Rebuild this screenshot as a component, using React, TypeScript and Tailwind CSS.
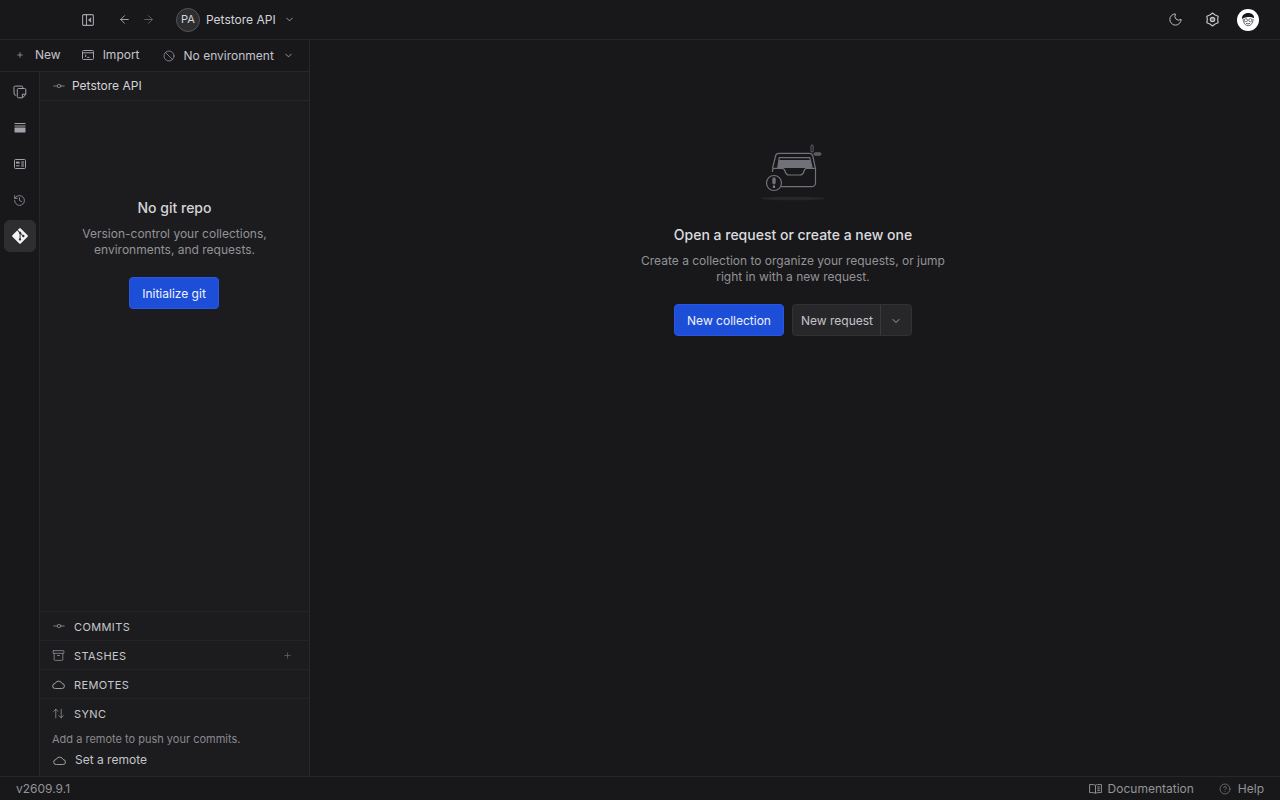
import {
  Archive,
  ArrowLeft,
  ArrowRight,
  ArrowUpDown,
  Ban,
  ChevronDown,
  CircleHelp,
  GitCommitHorizontal,
  History,
  Moon,
  Plus,
} from 'lucide-react'
import { FaGitAlt } from 'react-icons/fa'

function PanelIcon() {
  return (
    <svg width="12" height="12" viewBox="0 0 12 12" fill="none" stroke="#a1a1aa" strokeWidth="1.1">
      <rect x="0.6" y="0.6" width="10.8" height="10.8" rx="1.2" />
      <path d="M4.5 0.6V11.4" />
      <path d="M8.6 4.4L6.8 6l1.8 1.6z" fill="#a1a1aa" />
    </svg>
  )
}

function TerminalIcon() {
  return (
    <svg width="12" height="10" viewBox="0 0 12 10" fill="none" stroke="#a1a1aa" strokeWidth="1">
      <rect x="0.5" y="0.5" width="11" height="9" rx="1" />
      <path d="M0.5 2.8H11.5" />
      <path d="M2.8 4.6L4.2 5.8 2.8 7M5.2 7.4H7.4" />
    </svg>
  )
}

function CollectionsIcon() {
  return (
    <svg width="14" height="14" viewBox="0 0 14 14" fill="none" stroke="#a1a1aa" strokeWidth="1">
      <path d="M3.2 10.2H2.4A1.2 1.2 0 0 1 1.2 9L0.9 2.4A1.3 1.3 0 0 1 2.2 1.1H8.6A1.2 1.2 0 0 1 9.8 2.2V3" />
      <path d="M4.3 4.7A1.2 1.2 0 0 1 5.5 3.5H11.6A1.2 1.2 0 0 1 12.8 4.7V9.4L9.6 12.8H5.5A1.2 1.2 0 0 1 4.3 11.6Z" />
      <path d="M9.4 12.6V9.2H12.8" />
    </svg>
  )
}

function StackIcon() {
  return (
    <svg width="12" height="10" viewBox="0 0 12 10" fill="#a1a1aa">
      <rect x="0.5" y="0" width="11" height="1" />
      <rect x="0.5" y="2.5" width="11" height="1" />
      <rect x="0.5" y="4.5" width="11" height="5" rx="0.4" />
    </svg>
  )
}

function EnvIcon() {
  return (
    <svg width="12" height="10" viewBox="0 0 12 10" fill="none" stroke="#a1a1aa" strokeWidth="1">
      <rect x="0.5" y="0.5" width="11" height="9" rx="1" />
      <rect x="2" y="2.6" width="3.6" height="2" fill="#a1a1aa" stroke="none" />
      <path d="M2 6.8H5.6M7.2 3H10M7.2 5H10M7.2 7H10" />
    </svg>
  )
}

function CloudIcon() {
  return (
    <svg width="13" height="9" viewBox="0 0 14 10" fill="none" stroke="#a1a1aa" strokeWidth="1.1">
      <path d="M3.5 9.5H10.5A2.8 2.8 0 0 0 11 3.9A4.2 4.2 0 0 0 3.2 3.9A2.8 2.8 0 0 0 3.5 9.5Z" />
    </svg>
  )
}

function BookIcon() {
  return (
    <svg width="13" height="10" viewBox="0 0 13 10" fill="none" stroke="#8f8f8f" strokeWidth="1">
      <path d="M6.5 1.2C5.5 0.7 4 0.5 0.6 0.5V8.5C4 8.5 5.5 8.7 6.5 9.3C7.5 8.7 9 8.5 12.4 8.5V0.5C9 0.5 7.5 0.7 6.5 1.2Z" />
      <path d="M6.5 1.2V9.3M8.3 3H10.8M8.3 4.8H10.8M8.3 6.6H10.8" />
    </svg>
  )
}

function CogIcon() {
  return (
    <svg width="15" height="15" viewBox="0 0 15 15" fill="none" stroke="#c4c4c9" strokeWidth="1.2">
      <path
        d="M7.5 1 10.1 3 13.13 4.25 12.7 7.5 13.13 10.75 10.1 12 7.5 14 4.9 12 1.87 10.75 2.3 7.5 1.87 4.25 4.9 3Z"
        strokeLinejoin="round"
      />
      <circle cx="7.5" cy="7.5" r="2.2" fill="#c4c4c9" fillOpacity="0.5" />
    </svg>
  )
}

function Avatar() {
  return (
    <svg width="22" height="22" viewBox="0 0 22 22">
      <circle cx="11" cy="11" r="11" fill="#fff" />
      <path d="M5 10C4.6 6.2 7.6 3.8 11.4 3.9c3.4.1 6 2 5.6 5.2-1.8-1-3.7-1.3-5.8-1.2-2.2.1-4.3.7-6.2 2.1z" fill="#18181b" />
      <path d="M6.2 10.2c.2 3.8 2.1 6.5 4.9 6.5s4.8-2.7 5-6.7" fill="none" stroke="#3f3f46" strokeWidth="0.8" />
      <circle cx="8.9" cy="11.2" r="1.6" fill="none" stroke="#3f3f46" strokeWidth="0.7" />
      <circle cx="13.3" cy="11.2" r="1.6" fill="none" stroke="#3f3f46" strokeWidth="0.7" />
      <path d="M9 14.3c1.3.7 2.7.7 4 0" fill="none" stroke="#3f3f46" strokeWidth="0.8" />
    </svg>
  )
}

function InboxIllustration() {
  return (
    <svg width="66" height="58" viewBox="0 0 66 58" fill="none" stroke="#71717a" strokeWidth="1.2">
      <path d="M12.5 24.5 15.5 12A3.5 3.5 0 0 1 19 9.3H49.5A3.5 3.5 0 0 1 52.8 12L55.5 24.5V39A3.7 3.7 0 0 1 51.8 42.7H21" />
      <path d="M17.7 24 19.3 13.7H49.8L52.2 24" />
      <path d="M19 16H50.2L51.7 24H17.9Z" fill="#71717a" stroke="none" />
      <path d="M12.5 28V26.3A2 2 0 0 1 14.5 24.3H22C24 24.3 24.5 25.5 25 27C25.8 30 27 31 29 31H40C42 31 43.3 30 44 27C44.5 25.3 45.2 24.3 47 24.3H55.5" />
      <circle cx="14" cy="39" r="7.5" fill="#18181b" />
      <rect x="12.8" y="33.800" width="2.4" height="6.200" rx="1" strokeWidth="0.9" fill="#71717a" />
      <circle cx="14" cy="42.7" r="1.2" fill="#8a8a92" stroke="none" />
      <rect x="51" y="1" width="2.2" height="7" rx="1.1" strokeWidth="0.8" />
      <rect x="54" y="8.8" width="7" height="2.4" rx="1.2" strokeWidth="0.8" fill="#52525b" />
      <ellipse cx="33" cy="54.5" rx="32" ry="1.8" fill="#27272a" stroke="none" />
    </svg>
  )
}

function SectionRow({ label, icon, plus }: { label: string; icon: React.ReactNode; plus?: boolean }) {
  return (
    <div className="flex h-[29px] shrink-0 items-center border-t border-[#232326] pl-[12px] pr-[17px]">
      <span className="flex w-[22px] shrink-0 items-center">{icon}</span>
      <span className="pt-[3px] text-[11px] tracking-[0.035em] text-[#c8c8cc]">{label}</span>
      {plus && <Plus size={9} className="ml-auto text-[#63636b]" />}
    </div>
  )
}

function RailButton({ children, active }: { children: React.ReactNode; active?: boolean }) {
  return (
    <div className={`flex h-8 w-8 items-center justify-center rounded-md ${active ? 'bg-[#2e2e31]' : ''}`}>
      {children}
    </div>
  )
}

export default function App() {
  return (
    <div className="flex h-screen w-[1280px] flex-col overflow-hidden bg-[#18181b] font-['Inter',sans-serif] text-[12px] text-[#e4e4e7]">
      {/* title bar */}
      <div className="flex h-10 shrink-0 items-center border-b border-[#27272a] pl-[82px] pr-[21px]">
        <PanelIcon />
        <ArrowLeft size={13} strokeWidth={1.6} className="ml-[24px] text-[#b4b4bb]" />
        <ArrowRight size={13} strokeWidth={1.6} className="ml-[11px] text-[#6b6b73]" />
        <div className="ml-[21px] flex h-6 w-6 items-center justify-center rounded-full border border-[#52525b] bg-[#2e2e31] text-[11px] text-[#d4d4d8]">
          PA
        </div>
        <span className="ml-[6px] text-[#d4d4d8]">Petstore API</span>
        <ChevronDown size={11} className="ml-[8px] text-[#a1a1aa]" />
        <div className="ml-auto flex items-center">
          <Moon size={15} strokeWidth={1.5} className="text-[#c4c4c9]" />
          <div className="ml-[22px]">
            <CogIcon />
          </div>
          <div className="ml-[17px]">
            <Avatar />
          </div>
        </div>
      </div>

      <div className="flex min-h-0 flex-1">
        {/* left column */}
        <div className="flex w-[310px] shrink-0 flex-col border-r border-[#27272a] bg-[#1c1c1f]">
          <div className="flex h-8 shrink-0 items-center whitespace-nowrap border-b border-[#27272a] bg-[#18181b] pb-px pl-[16px] text-[#c4c4c9]">
            <Plus size={8} strokeWidth={2} className="text-[#b4b4bb]" />
            <span className="ml-[11px]">New</span>
            <span className="ml-[21px]">
              <TerminalIcon />
            </span>
            <span className="ml-[9px]">Import</span>
            <Ban size={12} strokeWidth={1.4} className="ml-[23px] mt-px text-[#a1a1aa]" />
            <span className="ml-[9px] pt-[2px]">No environment</span>
            <ChevronDown size={11} className="ml-[9px] mt-px text-[#a1a1aa]" />
          </div>

          <div className="flex min-h-0 flex-1">
            <div className="flex w-10 shrink-0 flex-col items-center gap-1 border-r border-[#27272a] bg-[#18181b] pt-1">
              <RailButton>
                <CollectionsIcon />
              </RailButton>
              <RailButton>
                <StackIcon />
              </RailButton>
              <RailButton>
                <EnvIcon />
              </RailButton>
              <RailButton>
                <History size={13} strokeWidth={1.4} className="text-[#a1a1aa]" />
              </RailButton>
              <RailButton active>
                <FaGitAlt size={18} className="text-[#f4f4f5]" />
              </RailButton>
            </div>

            <div className="flex min-w-0 flex-1 flex-col">
              <div className="flex h-[29px] shrink-0 items-center border-b border-[#27272a] pl-[12px] text-[#d4d4d8]">
                <GitCommitHorizontal size={14} strokeWidth={1.2} className="text-[#a1a1aa]" />
                <span className="ml-[6px]">Petstore API</span>
              </div>

              <div className="flex flex-1 flex-col items-center pt-[98px]">
                <h3 className="text-[14px] font-medium leading-[18px] text-[#d4d4d8]">No git repo</h3>
                <p className="mt-[9px] w-[220px] text-center leading-4 text-[#939396]">
                  Version-control your collections, environments, and requests.
                </p>
                <button className="mr-[1px] mt-[19px] h-8 w-[90px] rounded-[4px] border border-[#2a55e6] bg-[#1d4ed8] pt-[2px] text-[#eff3ff]">
                  Initialize git
                </button>
              </div>

              <SectionRow label="COMMITS" icon={<GitCommitHorizontal size={14} strokeWidth={1.2} className="text-[#a1a1aa]" />} />
              <SectionRow label="STASHES" icon={<Archive size={13} strokeWidth={1.3} className="text-[#a1a1aa]" />} plus />
              <SectionRow label="REMOTES" icon={<CloudIcon />} />
              <SectionRow label="SYNC" icon={<ArrowUpDown size={13} strokeWidth={1.3} className="text-[#a1a1aa]" />} />
              <div className="flex h-[49px] shrink-0 flex-col pl-[12px]">
                <p className="mt-[4px] text-[11px] leading-4 text-[#8a8a8e]">Add a remote to push your commits.</p>
                <div className="mt-[4px] flex items-center pl-[1px]">
                  <CloudIcon />
                  <span className="ml-[9px] text-[#c4c4c9]">Set a remote</span>
                </div>
              </div>
            </div>
          </div>
        </div>

        {/* empty state */}
        <div className="flex flex-1 flex-col items-center pr-[4px] pt-[104px]">
          <InboxIllustration />
          <h2 className="mt-[23px] text-[14px] font-medium leading-5 text-[#dcdcdf]">Open a request or create a new one</h2>
          <p className="mt-[8px] w-[320px] text-center leading-4 text-[#939396]">
            Create a collection to organize your requests, or jump right in with a new request.
          </p>
          <div className="mt-[19px] flex items-center">
            <button className="h-8 w-[110px] rounded-[4px] border border-[#2a55e6] bg-[#1d4ed8] pt-[2px] text-[#eff3ff]">
              New collection
            </button>
            <div className="ml-2 flex h-8 items-center rounded-[4px] border border-[#323236] bg-[#27272a] text-[#c4c4c9]">
              <span className="flex h-full w-[88px] items-center justify-center border-r border-[#3a3a3e] pl-px pt-[2px]">New request</span>
              <span className="flex h-full w-[30px] items-center justify-center pt-[2px]">
                <ChevronDown size={12} className="text-[#a1a1aa]" />
              </span>
            </div>
          </div>
        </div>
      </div>

      {/* status bar */}
      <div className="flex h-6 shrink-0 items-center border-t border-[#27272a] px-[16px] pt-px text-[#939396]">
        <span>v2609.9.1</span>
        <span className="ml-auto">
          <BookIcon />
        </span>
        <span className="ml-[6px]">Documentation</span>
        <CircleHelp size={12} strokeWidth={1.2} className="ml-[25px]" />
        <span className="ml-[7px]">Help</span>
      </div>
    </div>
  )
}
